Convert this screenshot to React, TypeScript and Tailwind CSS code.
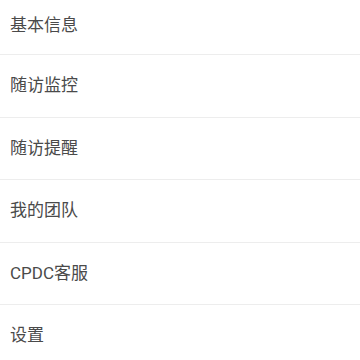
import React from "react";

const items = ["基本信息", "随访监控", "随访提醒", "我的团队", "CPDC客服", "设置"];

export default function App() {
  return (
    <div
      className="w-[360px] h-[360px] bg-white overflow-hidden"
      style={{ fontFamily: 'Roboto, "Noto Sans CJK SC", sans-serif' }}
    >
      <div className="flex flex-col">
        {items.map((t, i) => (
          <div
            key={t}
            className={
              (i === 0 ? "h-[55px] pb-[2px] " : "h-[62.5px] ") +
              "flex items-center pl-[10px] text-[17px] text-[#4a4a4a] border-b border-[#ededed]"
            }
          >
            {t}
          </div>
        ))}
      </div>
    </div>
  );
}
